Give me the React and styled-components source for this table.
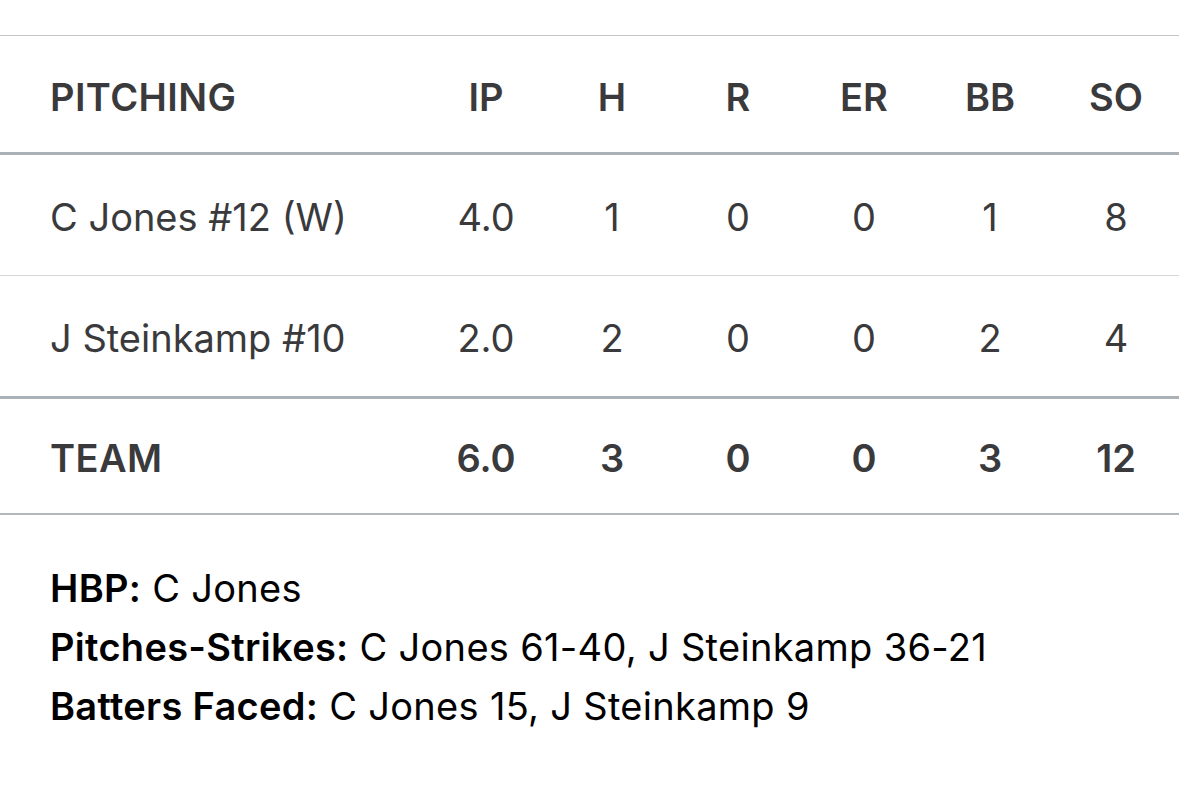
import React from "react";
import styled, { createGlobalStyle } from "styled-components";

const pitchers = [
  { name: "C Jones #12 (W)", ip: "4.0", h: 1, r: 0, er: 0, bb: 1, so: 8 },
  { name: "J Steinkamp #10", ip: "2.0", h: 2, r: 0, er: 0, bb: 2, so: 4 },
];

const team = { ip: "6.0", h: 3, r: 0, er: 0, bb: 3, so: 12 };

const cols = ["ip", "h", "r", "er", "bb", "so"];

const App = () => {
  return (
    <>
      <GlobalStyle />
      <Page>
        <Table>
          <thead>
            <HeadRow>
              <NameCell as="th" $bold>PITCHING</NameCell>
              {cols.map((c) => (
                <StatCell as="th" key={c} $bold>
                  {c.toUpperCase()}
                </StatCell>
              ))}
            </HeadRow>
          </thead>
          <tbody>
            {pitchers.map((p, i) => (
              <Row key={p.name} $last={i === pitchers.length - 1}>
                <NameCell>{p.name}</NameCell>
                {cols.map((c) => (
                  <StatCell key={c}>{p[c]}</StatCell>
                ))}
              </Row>
            ))}
            <TeamRow>
              <NameCell $bold>TEAM</NameCell>
              {cols.map((c) => (
                <StatCell key={c} $bold>
                  {team[c]}
                </StatCell>
              ))}
            </TeamRow>
          </tbody>
        </Table>
        <Notes>
          <Note>
            <Label>HBP:</Label> C Jones
          </Note>
          <Note>
            <Label>Pitches-Strikes:</Label> C Jones 61-40, J Steinkamp 36-21
          </Note>
          <Note>
            <Label>Batters Faced:</Label> C Jones 15, J Steinkamp 9
          </Note>
        </Notes>
      </Page>
    </>
  );
};

export default App;

const GlobalStyle = createGlobalStyle`
  html, body {
    margin: 0;
    background: #fff;
  }
  body {
    font-family: Inter, "Liberation Sans", sans-serif;
    -webkit-font-smoothing: antialiased;
  }
`;

const Page = styled.div`
  width: 1179px;
  padding-top: 35px;
`;

const Table = styled.table`
  width: 100%;
  border-collapse: collapse;
  table-layout: fixed;
  border-top: 1px solid #c4c4c6;
`;

const HeadRow = styled.tr`
  height: 118px;
  border-bottom: 3px solid #aab2b7;

  th {
    padding-top: 6px;
  }
`;

const Row = styled.tr`
  height: 122px;
  border-bottom: ${(p) => (p.$last ? "3px solid #aab2b7" : "1px solid #d6d6d8")};

  td {
    padding-top: 4px;
  }
`;

const TeamRow = styled.tr`
  height: 116px;
  border-bottom: 2px solid #b2b9be;

  td {
    padding-top: 4px;
  }
`;

const NameCell = styled.td`
  width: 373px;
  padding: 0 0 0 50px;
  text-align: left;
  font-size: 38px;
  letter-spacing: ${(p) => (p.$bold ? "0.4px" : "0")};
  font-weight: ${(p) => (p.$bold ? 600 : 400)};
  color: #3a3a3c;
`;

const StatCell = styled.td`
  width: 126px;
  padding: 0;
  text-align: center;
  font-size: 38px;
  font-weight: ${(p) => (p.$bold ? 600 : 400)};
  color: #3a3a3c;
`;

const Notes = styled.div`
  padding: 44px 50px 0;
  display: flex;
  flex-direction: column;
`;

const Note = styled.div`
  font-size: 38px;
  line-height: 59px;
  letter-spacing: 0.3px;
  color: #000;
`;

const Label = styled.span`
  font-weight: 600;
`;
